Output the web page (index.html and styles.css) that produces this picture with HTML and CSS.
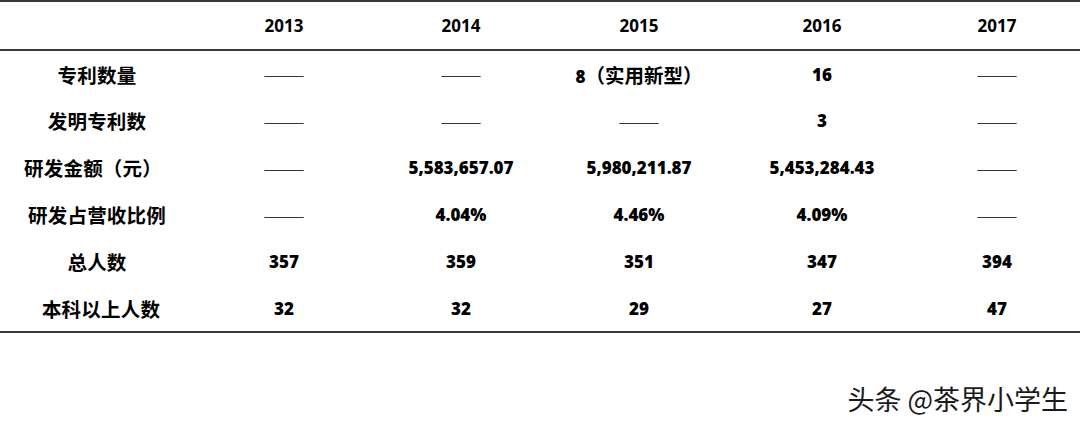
FILE: index.html
```html
<!DOCTYPE html>
<html lang="zh">
<head>
<meta charset="utf-8">
<link rel="stylesheet" href="styles.css">
</head>
<body>
<div class="page">
  <table class="data">
    <colgroup>
      <col class="c0"><col class="c1"><col class="c2"><col class="c3"><col class="c4"><col class="c5">
    </colgroup>
    <thead>
      <tr><th></th><th>2013</th><th>2014</th><th>2015</th><th>2016</th><th>2017</th></tr>
    </thead>
    <tbody>
      <tr><td class="lbl">专利数量</td><td><span class="dash">——</span></td><td><span class="dash">——</span></td><td>8<span class="cjk">（实用新型）</span></td><td>16</td><td><span class="dash">——</span></td></tr>
      <tr><td class="lbl">发明专利数</td><td><span class="dash">——</span></td><td><span class="dash">——</span></td><td><span class="dash">——</span></td><td>3</td><td><span class="dash">——</span></td></tr>
      <tr><td class="lbl lbl-l">研发金额（元）</td><td><span class="dash">——</span></td><td>5,583,657.07</td><td>5,980,211.87</td><td>5,453,284.43</td><td><span class="dash">——</span></td></tr>
      <tr><td class="lbl">研发占营收比例</td><td><span class="dash">——</span></td><td>4.04%</td><td>4.46%</td><td>4.09%</td><td><span class="dash">——</span></td></tr>
      <tr><td class="lbl">总人数</td><td>357</td><td>359</td><td>351</td><td>347</td><td>394</td></tr>
      <tr><td class="lbl lbl-r">本科以上人数</td><td>32</td><td>32</td><td>29</td><td>27</td><td>47</td></tr>
    </tbody>
  </table>
  <div class="mark-row"><span class="mark">头条 @茶界小学生</span></div>
</div>
</body>
</html>
```

FILE: styles.css
```css
html, body {
  margin: 0;
  padding: 0;
  background: #ffffff;
}
.page {
  width: 1080px;
  height: 426px;
  overflow: hidden;
}
.data {
  width: 1080px;
  table-layout: fixed;
  border-collapse: collapse;
  border-top: 2px solid #3a3a3a;
  border-bottom: 2px solid #3a3a3a;
  font-family: "Open Sans", "Noto Sans CJK SC", sans-serif;
  font-weight: 800;
  font-size: 17px;
  color: #000;
}
.c0 { width: 194px; }
.c1 { width: 180px; }
.c2 { width: 174px; }
.c3 { width: 182px; }
.c4 { width: 184px; }
.c5 { width: 166px; }
thead tr {
  height: 49px;
  border-bottom: 2px solid #3a3a3a;
}
tbody tr {
  height: 47px;
}
th, td {
  padding: 0;
  text-align: center;
  vertical-align: middle;
  white-space: nowrap;
}
.lbl {
  font-family: "Noto Sans CJK SC", sans-serif;
  font-weight: 700;
  font-size: 19.5px;
  letter-spacing: 0.2px;
}
.lbl-l { padding-right: 8px; }
.lbl-r { padding-left: 8px; }
.cjk {
  font-family: "Noto Sans CJK SC", sans-serif;
  font-size: 19.5px;
  font-weight: 700;
}
.dash {
  font-family: "Noto Sans CJK SC", sans-serif;
  font-weight: 300;
  font-size: 25px;
  line-height: 1;
  color: #333;
}
.mark-row {
  display: flex;
  justify-content: flex-end;
  padding: 52px 12px 0 0;
}
.mark {
  font-family: "Noto Sans CJK SC", sans-serif;
  font-size: 27px;
  font-weight: 400;
  color: #1a1a1a;
  line-height: 1;
  text-shadow: 1px 1px 0 #ffffff, -1px -1px 0 #ffffff;
}
```
